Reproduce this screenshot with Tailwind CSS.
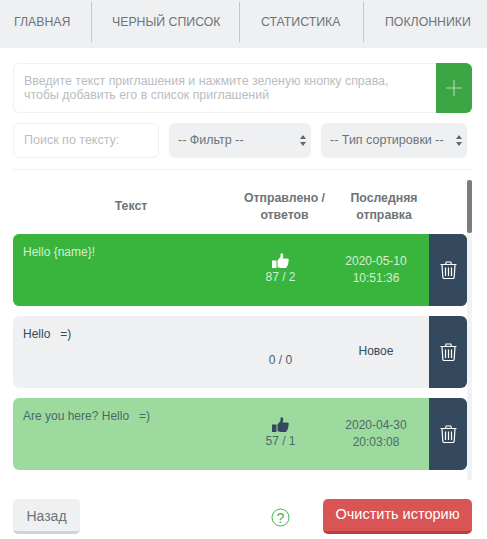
<!DOCTYPE html>
<html lang="ru">
<head>
<meta charset="utf-8">
<script src="https://cdn.jsdelivr.net/npm/@tailwindcss/browser@4"></script>
</head>
<body class="w-[487px] h-[539px] overflow-hidden bg-white font-['Liberation_Sans',Arial,sans-serif] text-[#34495e]">
<nav class="h-[48px] bg-[#eef0f2] flex items-start pt-[2px] text-[12.3px] text-[#6d7479] whitespace-nowrap">
  <div class="w-[92px] h-[40px] border-r border-[#c4c7ca] flex items-center pl-[14px]">ГЛАВНАЯ</div>
  <div class="w-[148px] h-[40px] border-r border-[#c4c7ca] flex items-center pl-[20px]">ЧЕРНЫЙ СПИСОК</div>
  <div class="w-[124px] h-[40px] border-r border-[#c4c7ca] flex items-center pl-[21px]">СТАТИСТИКА</div>
  <div class="h-[40px] flex items-center pl-[21px]">ПОКЛОННИКИ</div>
</nav>
<main class="px-[13px] w-[472px] box-content">
  <div class="mt-[15px] h-[50px] flex w-[459px]">
    <div class="flex-1 border border-[#eef0f2] border-r-0 rounded-l-[6px] pl-[10px] pt-[10px] text-[12.4px] leading-[14px] text-[#b9bdc1] whitespace-nowrap">Введите текст приглашения и нажмите зеленую кнопку справа,<br>чтобы добавить его в список приглашений</div>
    <div class="w-[36px] bg-[#3ba544] rounded-r-[6px] flex items-center justify-center">
      <svg width="16" height="16" viewBox="0 0 16 16" stroke="#a9dcae" stroke-width="1.2"><path d="M8 0v16M0 8h16"/></svg>
    </div>
  </div>
  <div class="mt-[10px] flex h-[35px] w-[459px] text-[12.5px]">
    <div class="w-[146px] border border-[#eef0f2] rounded-[6px] pl-[10px] flex items-center text-[#b9bdc1]">Поиск по тексту:</div>
    <div class="ml-[10px] w-[142px] bg-[#eef0f2] rounded-[6px] pl-[9px] pr-[5px] flex items-center justify-between text-[#6d7479]">-- Фильтр --
      <svg width="6" height="11" viewBox="0 0 6 11" fill="#5f666c"><path d="M3 0l3 4H0zM3 11L0 7h6z"/></svg>
    </div>
    <div class="ml-[10px] w-[146px] bg-[#eef0f2] rounded-[6px] pl-[9px] pr-[5px] flex items-center justify-between text-[#6d7479]">-- Тип сортировки --
      <svg width="6" height="11" viewBox="0 0 6 11" fill="#5f666c"><path d="M3 0l3 4H0zM3 11L0 7h6z"/></svg>
    </div>
  </div>
  <hr class="mt-[11px] w-[459px] border-0 border-t border-[#eef0f2]">
  <section class="mt-[10px] w-[459px] h-[300px] flex justify-between">
    <div class="w-[454px]">
      <div class="h-[54px] flex text-[12.3px] font-bold leading-[17px] text-[#6d7479] text-center">
        <div class="w-[218px] pl-[18px] pt-[18px]">Текст</div>
        <div class="w-[107px] pt-[10px]">Отправлено /<br>ответов</div>
        <div class="w-[92px] pt-[10px]">Последняя<br>отправка</div>
      </div>
      <div class="h-[72px] rounded-[6px] overflow-hidden flex bg-[#39b53d] text-[#d3efd4] text-[12px]">
        <div class="w-[222px] pl-[10px] pt-[10px] leading-[16px]">Hello {name}!</div>
        <div class="w-[91px] flex flex-col items-center pt-[19px] leading-[17px]">
          <svg width="17" height="16" viewBox="0 0 17 16" fill="#fff"><path d="M0 7.5h4.500V15H0zM5.500 7.500 8.500 4V1c0-1 2-1.300 2.600.5.400 1.500-.1 3-.6 4h4.800c1.700 0 2 2 .9 2.800.7.800.5 2-.4 2.500.4.900 0 2-.9 2.300.2 1-.5 1.900-1.600 1.900H8.500c-1.500 0-2-.8-3-1z"/></svg>
          <div>87 / 2</div>
        </div>
        <div class="w-[100px] text-center pt-[19px] leading-[17px]">2020-05-10<br>10:51:36</div>
        <div class="w-[3px]"></div>
        <div class="flex-1 bg-[#34495e] flex items-center justify-center">
          <svg width="17" height="18" viewBox="0 0 17 18" fill="none" stroke="#fff" stroke-width="1.200"><path d="M.5 3.500h16M5.500 3.300 6.200 1h4.600l.7 2.300M2 4l.8 12c0 1 .7 1.500 1.500 1.500h8.400c.8 0 1.500-.5 1.500-1.500L15 4M5.500 6.500v8.500M8.500 6.500v8.500M11.500 6.500v8.500"/></svg>
        </div>
      </div>
      <div class="mt-[10px] h-[72px] rounded-[6px] overflow-hidden flex bg-[#eef0f2] text-[#34495e] text-[12px]">
        <div class="w-[222px] pl-[10px] pt-[10px] leading-[16px] whitespace-pre">Hello   =)</div>
        <div class="w-[91px] flex flex-col items-center pt-[36px] leading-[17px] text-[#4d5b69]">0 / 0</div>
        <div class="w-[100px] text-center pt-[27px] leading-[17px]">Новое</div>
        <div class="w-[3px]"></div>
        <div class="flex-1 bg-[#34495e] flex items-center justify-center">
          <svg width="17" height="18" viewBox="0 0 17 18" fill="none" stroke="#fff" stroke-width="1.200"><path d="M.5 3.500h16M5.500 3.300 6.200 1h4.600l.7 2.300M2 4l.8 12c0 1 .7 1.500 1.500 1.500h8.400c.8 0 1.500-.5 1.500-1.500L15 4M5.500 6.500v8.500M8.500 6.500v8.500M11.500 6.500v8.500"/></svg>
        </div>
      </div>
      <div class="mt-[10px] h-[72px] rounded-[6px] overflow-hidden flex bg-[#9cda9e] text-[#4d6a68] text-[12px]">
        <div class="w-[222px] pl-[10px] pt-[10px] leading-[16px] whitespace-pre">Are you here? Hello   =)</div>
        <div class="w-[91px] flex flex-col items-center pt-[19px] leading-[17px]">
          <svg width="17" height="16" viewBox="0 0 17 16" fill="#34495e"><path d="M0 7.500h4.500V15H0zM5.500 7.500 8.500 4V1c0-1 2-1.300 2.600.5.400 1.500-.1 3-.6 4h4.800c1.700 0 2 2 .9 2.800.7.800.5 2-.4 2.500.4.900 0 2-.9 2.300.2 1-.5 1.900-1.600 1.900H8.500c-1.500 0-2-.8-3-1z"/></svg>
          <div>57 / 1</div>
        </div>
        <div class="w-[100px] text-center pt-[19px] leading-[17px]">2020-04-30<br>20:03:08</div>
        <div class="w-[3px]"></div>
        <div class="flex-1 bg-[#34495e] flex items-center justify-center">
          <svg width="17" height="18" viewBox="0 0 17 18" fill="none" stroke="#fff" stroke-width="1.200"><path d="M.5 3.500h16M5.500 3.300 6.200 1h4.600l.7 2.300M2 4l.8 12c0 1 .7 1.500 1.500 1.500h8.400c.8 0 1.500-.5 1.500-1.500L15 4M5.500 6.500v8.500M8.500 6.500v8.500M11.500 6.500v8.500"/></svg>
        </div>
      </div>
    </div>
    <div class="w-[5px] bg-[#f0f2f5] rounded-[2px] h-[300px]">
      <div class="h-[53px] bg-[#7b7d7d] rounded-[2px]"></div>
    </div>
  </section>
  <footer class="mt-[19px] w-[459px] h-[35px] flex items-center">
    <div class="w-[67px] h-[35px] bg-[#eef0f2] border-b-[3px] border-[#d0d2d4] rounded-[5px] flex items-center justify-center pt-[2px] text-[14px] text-[#6d7479]">Назад</div>
    <svg class="ml-[191px] mt-[1px]" width="19" height="19" viewBox="0 0 19 19" fill="none" stroke="#3fb34a" stroke-width="1"><circle cx="9.500" cy="9.500" r="8.500"/><text x="9.500" y="14.500" text-anchor="middle" font-size="14" fill="#3fb34a" stroke="none" font-family="Liberation Sans">?</text></svg>
    <div class="ml-[33px] w-[149px] h-[35px] bg-[#d95454] border-b-[3px] border-[#bd3e3e] rounded-[5px] flex items-center justify-center text-[14.5px] text-white">Очистить историю</div>
  </footer>
</main>
</body>
</html>
